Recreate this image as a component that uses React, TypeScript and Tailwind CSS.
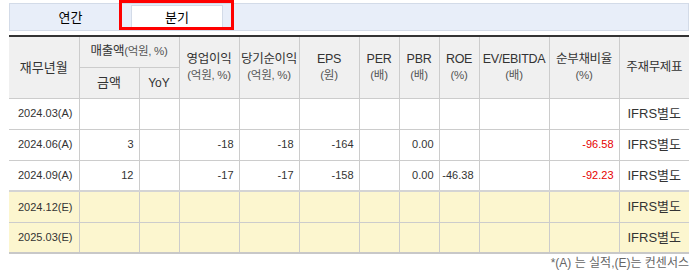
const FONT = { fontFamily: '"Liberation Sans", "Noto Sans CJK KR", sans-serif' };

type Row = {
  date: string;
  est?: boolean;
  sales?: string;
  yoy?: string;
  op?: string;
  net?: string;
  eps?: string;
  per?: string;
  pbr?: string;
  roe?: string;
  ev?: string;
  debt?: string;
};

const ROWS: Row[] = [
  { date: "2024.03(A)" },
  { date: "2024.06(A)", sales: "3", op: "-18", net: "-18", eps: "-164", pbr: "0.00", debt: "-96.58" },
  { date: "2024.09(A)", sales: "12", op: "-17", net: "-17", eps: "-158", pbr: "0.00", roe: "-46.38", debt: "-92.23" },
  { date: "2024.12(E)", est: true },
  { date: "2025.03(E)", est: true },
];

const WIDTHS = [70, 60, 40, 60, 60, 60, 40, 40, 40, 70, 70, 70];

function Head({ top, sub, last }: { top: string; sub?: string; last?: boolean }) {
  return (
    <th
      rowSpan={2}
      className={`p-0 font-normal text-[12.5px] leading-[16px] tracking-[-0.3px] whitespace-nowrap text-[#333] align-middle border-b border-[#ccc] ${last ? "" : "border-r"}`}
    >
      <div>{top}</div>
      {sub && <div className="text-[11.5px] text-[#555]">{sub}</div>}
    </th>
  );
}

function Num({ v, red }: { v?: string; red?: boolean }) {
  return (
    <td className={`p-0 text-right pr-[5px] text-[11px] border-r border-b border-[#ccc] ${red ? "text-[#e60000]" : "text-[#333]"}`}>
      {v}
    </td>
  );
}

export default function App() {
  return (
    <div className="w-[695px] h-[275px] bg-white relative" style={FONT}>
      {/* tabs */}
      <div className="pt-[3px] pl-[9px] pr-[6px]">
        <div className="h-[28px] bg-[#e8eef9] border border-[#d3dbe8] flex items-end">
          <div className="w-[121px] h-full flex items-center justify-center pt-[2px] text-[13px] text-black">연간</div>
          <div className="w-[92px] h-[25px] bg-white border border-b-0 border-[#d3dbe8] flex items-center justify-center text-[13px] text-black">
            분기
          </div>
        </div>
      </div>
      <div className="absolute left-[119px] top-0 w-[115px] h-[30px] border-[3px] border-[#ff0000]" />

      {/* table */}
      <div className="mt-[4px] ml-[9px] w-[680px]">
        <table className="w-full table-fixed border-collapse border-t-2 border-t-[#333] border-b-2 border-b-[#c8c8c8]">
          <colgroup>
            {WIDTHS.map((w, i) => (
              <col key={i} style={{ width: w }} />
            ))}
          </colgroup>
          <thead className="bg-[#f0f0f0]">
            <tr className="h-[31px]">
              <th rowSpan={2} className="p-0 font-normal text-[13px] text-[#333] border-r border-b border-[#ccc]">
                재무년월
              </th>
              <th colSpan={2} className="p-0 font-normal text-[12.5px] tracking-[-0.3px] text-[#333] border-r border-b border-[#ccc]">
                매출액<span className="text-[11.5px] text-[#555]">(억원, %)</span>
              </th>
              <Head top="영업이익" sub="(억원, %)" />
              <Head top="당기순이익" sub="(억원, %)" />
              <Head top="EPS" sub="(원)" />
              <Head top="PER" sub="(배)" />
              <Head top="PBR" sub="(배)" />
              <Head top="ROE" sub="(%)" />
              <Head top="EV/EBITDA" sub="(배)" />
              <Head top="순부채비율" sub="(%)" />
              <Head top="주재무제표" last />
            </tr>
            <tr className="h-[31px]">
              <th className="p-0 font-normal text-[13px] text-[#333] border-r border-b border-[#ccc]">금액</th>
              <th className="p-0 font-normal text-[12px] text-[#333] border-r border-b border-[#ccc]">YoY</th>
            </tr>
          </thead>
          <tbody>
            {ROWS.map((r, i) => (
              <tr
                key={r.date}
                className={`h-[31px] ${r.est ? "bg-[#fcf6cf]" : ""} ${i === 3 ? "border-t-2 border-t-[#d4d4d4]" : ""}`}
              >
                <td className="p-0 pl-[9px] text-[11px] text-[#333] border-r border-b border-[#ccc]">{r.date}</td>
                <Num v={r.sales} />
                <Num v={r.yoy} />
                <Num v={r.op} />
                <Num v={r.net} />
                <Num v={r.eps} />
                <Num v={r.per} />
                <Num v={r.pbr} />
                <Num v={r.roe} />
                <Num v={r.ev} />
                <Num v={r.debt} red />
                <td className="p-0 text-center text-[13px] text-[#333] border-b border-[#ccc]">IFRS별도</td>
              </tr>
            ))}
          </tbody>
        </table>
        <div className="text-right text-[12px] text-[#666] mt-[2px] leading-[15px]">*(A) 는 실적,(E)는 컨센서스</div>
      </div>
    </div>
  );
}
